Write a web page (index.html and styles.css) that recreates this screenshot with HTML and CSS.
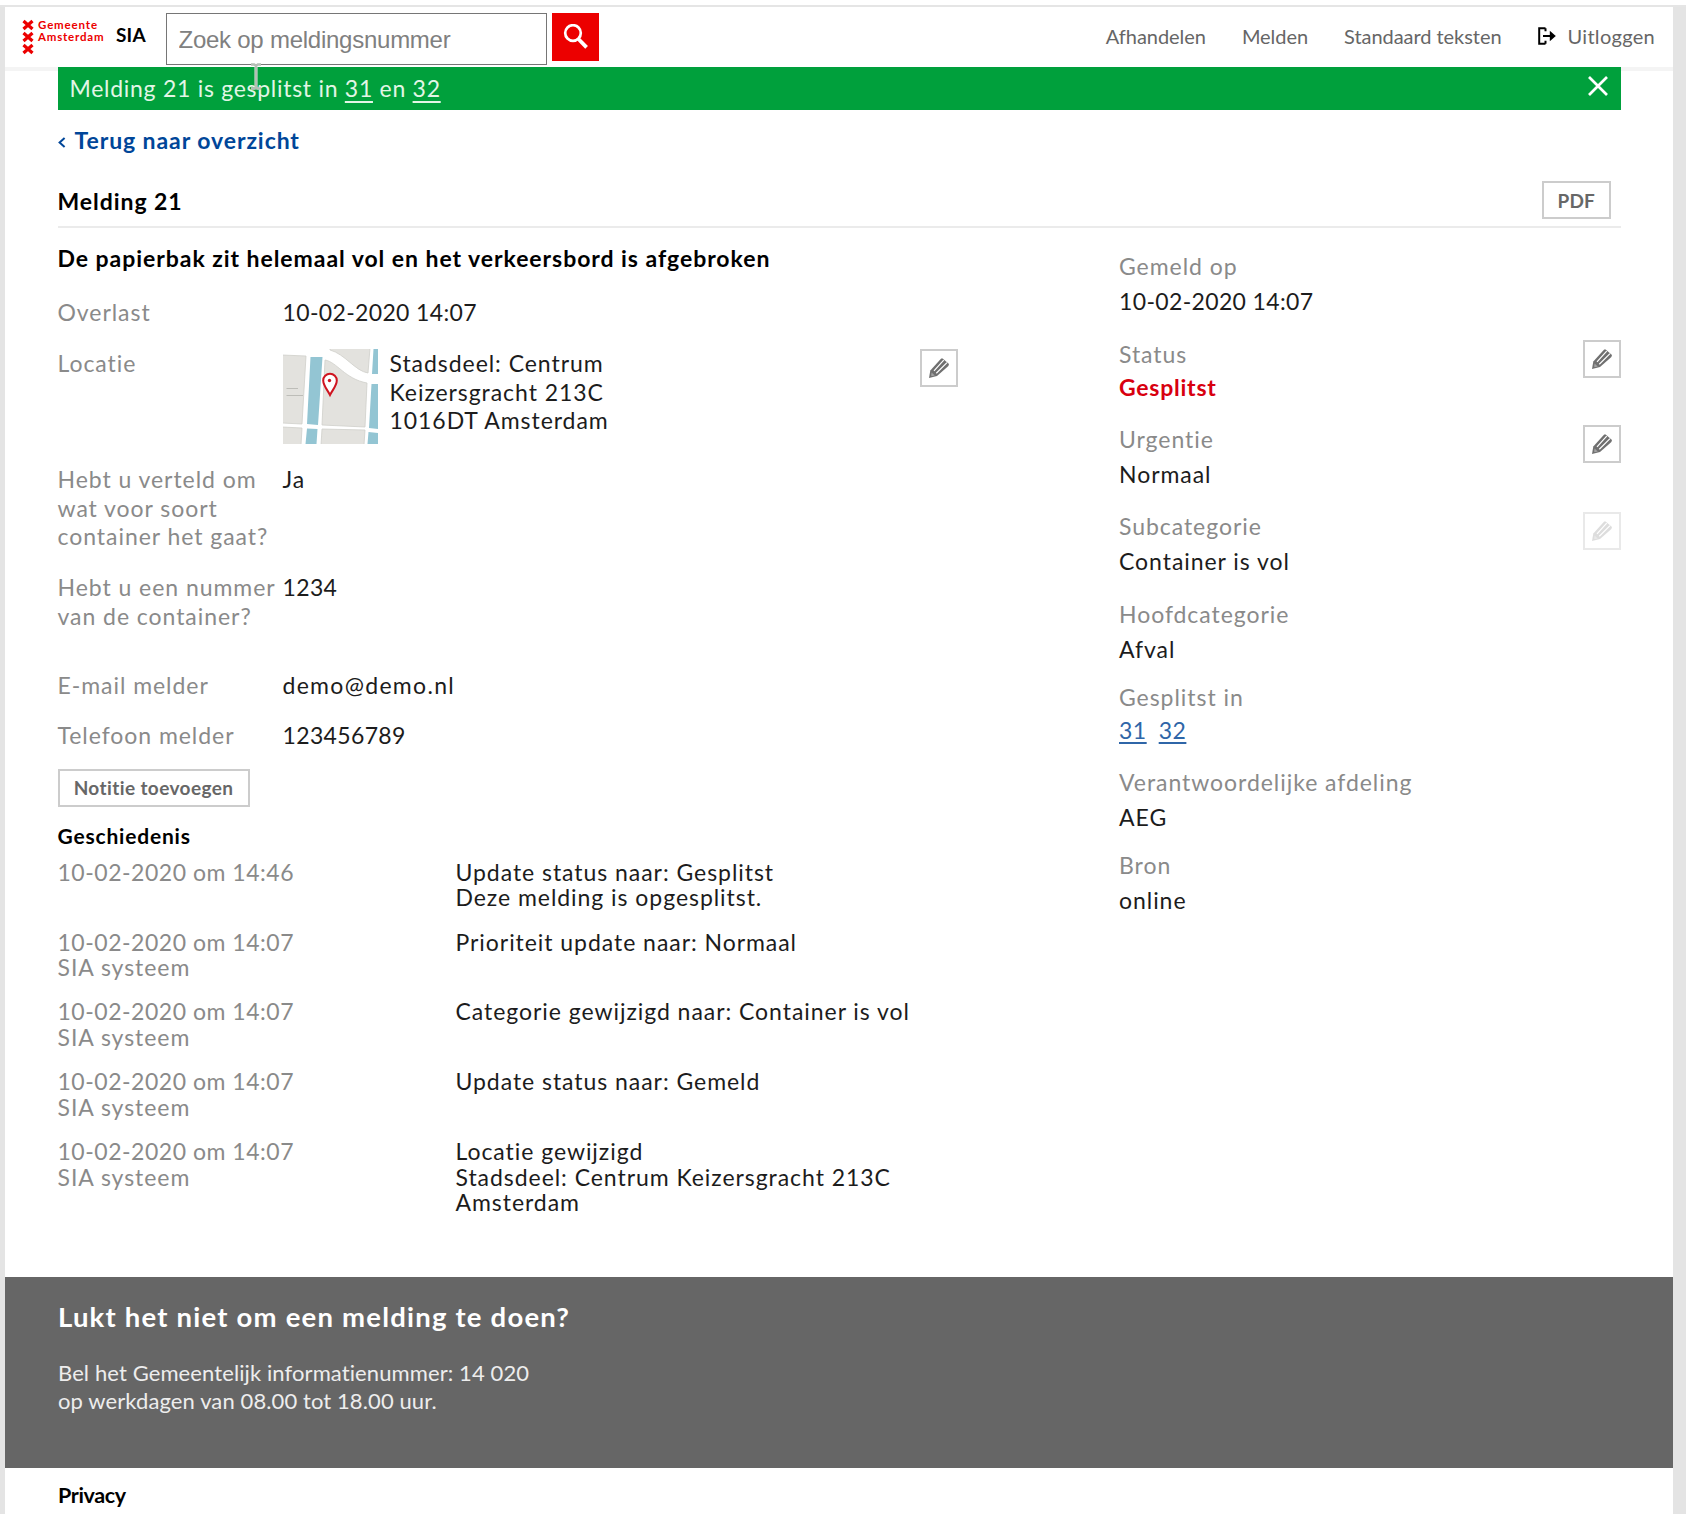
FILE: index.html
```html
<!DOCTYPE html>
<html lang="nl">
<head>
<meta charset="utf-8">
<title>SIA - Melding 21</title>
<link rel="stylesheet" href="styles.css">
</head>
<body>
<svg class="defs" aria-hidden="true">
  <symbol id="pencil" viewBox="0 0 22 22">
    <path d="M1 21 2.3 13.6 13.2 1.6 14.6 1.6 21 7 20.4 8.900 9 19Z" fill="currentColor"/>
    <path d="M6 13.900 15.700 3.200M8.300 16.200 19 5.600" stroke="#fff" stroke-width="1.200" fill="none"/>
    <path d="m3.600 15.600 3.200 3-3 .6-.7-.7Z" fill="#fff" opacity=".35"/>
  </symbol>
</svg>
<div class="shell">
  <div class="page">
    <header class="header">
      <a class="logo">
        <svg class="logo-crosses" viewBox="0 0 12 36" width="12" height="36"><path d="M1.5 2l9 8m0-8l-9 8M1.5 14l9 8m0-8l-9 8M1.5 26l9 8m0-8l-9 8" stroke="#ec0000" stroke-width="3.200" fill="none"/></svg>
        <span class="logo-text"><span class="logo-top">Gemeente</span><span class="logo-bottom">Amsterdam</span></span>
      </a>
      <span class="app-name">SIA</span>
      <form class="search">
        <input class="search-input" type="text" placeholder="Zoek op meldingsnummer">
        <button class="search-button" type="button" aria-label="Zoeken"><svg width="26" height="26" viewBox="0 0 26 26"><circle cx="10" cy="9" r="7.800" fill="none" stroke="#fff" stroke-width="2.700"/><path d="M15.400 15 23.600 23.400" stroke="#fff" stroke-width="3.800"/></svg></button>
      </form>
      <nav class="nav">
        <a>Afhandelen</a>
        <a>Melden</a>
        <a>Standaard teksten</a>
        <a class="logout"><svg width="18" height="18" viewBox="0 0 18 18"><path d="M7.500 1.200H1.200v15.600h6.300M7.500 13.800v3M7.500 1.200v3M5 9h9" fill="none" stroke="#000" stroke-width="2"/><path d="m11.800 3.800 6 5.200-6 5.200Z"/></svg>Uitloggen</a>
      </nav>
    </header>
    <main class="main">
      <div class="alert">
        <span>Melding 21 is gesplitst in <a>31</a> en <a>32</a></span>
        <svg class="alert-close" width="20" height="20" viewBox="0 0 20 20"><path d="M1 1 19 19M19 1 1 19" stroke="#fff" stroke-width="2.700"/></svg>
        <svg class="cursor" width="12" height="27" viewBox="0 0 12 27"><path d="M1 1.500h3.200L6 3l1.800-1.500H11M1 25.500h3.200L6 24l1.800 1.500H11M6 3v21" fill="none" stroke="#fff" stroke-width="4" opacity=".4"/><path d="M1 1.500h3.200L6 3l1.800-1.500H11M1 25.500h3.200L6 24l1.800 1.500H11M6 3v21" fill="none" stroke="#b4beb5" stroke-width="2.400"/></svg>
      </div>
      <a class="back"><svg width="8" height="11" viewBox="0 0 8 11"><path d="M6.600 1 1.600 5.500l5 4.500" fill="none" stroke="#004699" stroke-width="2"/></svg>Terug naar overzicht</a>
      <div class="title-row"><h1>Melding 21</h1><button class="button pdf" type="button">PDF</button></div>
      <div class="columns">
        <section class="details">
          <h2>De papierbak zit helemaal vol en het verkeersbord is afgebroken</h2>
          <dl class="rows">
            <div class="row"><dt>Overlast</dt><dd class="digits">10-02-2020 14:07</dd></div>
            <div class="row location">
              <dt>Locatie</dt>
              <dd>
                <svg class="map" width="95" height="95" viewBox="0 0 95 95">
                  <path fill="#fff" d="M0 0h95v95H0z"/>
                  <path fill="#e3e2de" stroke="#cfcfca" stroke-width=".8" d="M-1 6 23 7 19 75-1 74ZM-1 78l20 1-1 17H-1ZM42 11C54 13 62 30 84 34L82 78 39 76ZM39 80l43 1-1 15H38ZM47-1H87L85 24C72 22 62 5 47 1Z"/>
                  <path fill="#93c5d3" d="M27.500 8H39.500L35 76 24 75ZM24 79.500 34.500 80 33.500 95H22.500ZM90.500 0H95V25H89ZM88.500 35H95V80L86 79ZM85.500 83 95 84V95H84.500Z"/>
                  <path d="M3.500 39.500H15M3.500 46.500H20" stroke="#bdbdb8" stroke-width="1"/>
                  <path d="M47 46C44.500 41 40.200 36.500 40.200 31.500a6.800 6.800 0 0 1 13.600 0C53.800 36.500 49.500 41 47 46Z" fill="#fff" stroke="#cf1420" stroke-width="2"/>
                  <circle cx="46.500" cy="31.500" r="1.700" fill="#cf1420"/>
                </svg>
                <address>Stadsdeel: Centrum<br>Keizersgracht 213C<br>1016DT Amsterdam</address>
              </dd>
              <button class="edit" type="button" aria-label="Locatie wijzigen"><svg width="22" height="22"><use href="#pencil"/></svg></button>
            </div>
            <div class="row kind"><dt>Hebt u verteld om wat voor soort container het gaat?</dt><dd>Ja</dd></div>
            <div class="row number"><dt>Hebt u een nummer van de container?</dt><dd class="digits">1234</dd></div>
            <div class="row email"><dt>E-mail melder</dt><dd class="mail">demo@demo.nl</dd></div>
            <div class="row"><dt>Telefoon melder</dt><dd class="digits">123456789</dd></div>
          </dl>
          <button class="button note" type="button">Notitie toevoegen</button>
          <h3>Geschiedenis</h3>
          <ul class="history">
            <li><div class="when"><span class="digits">10-02-2020 om 14:46</span></div><div>Update status naar: Gesplitst<br>Deze melding is opgesplitst.</div></li>
            <li><div class="when"><span class="digits">10-02-2020 om 14:07</span><br>SIA systeem</div><div>Prioriteit update naar: Normaal</div></li>
            <li><div class="when"><span class="digits">10-02-2020 om 14:07</span><br>SIA systeem</div><div>Categorie gewijzigd naar: Container is vol</div></li>
            <li><div class="when"><span class="digits">10-02-2020 om 14:07</span><br>SIA systeem</div><div>Update status naar: Gemeld</div></li>
            <li><div class="when"><span class="digits">10-02-2020 om 14:07</span><br>SIA systeem</div><div>Locatie gewijzigd<br>Stadsdeel: Centrum Keizersgracht 213C<br>Amsterdam</div></li>
          </ul>
        </section>
        <aside class="meta">
          <dl>
            <div class="entry"><div><dt>Gemeld op</dt><dd class="digits">10-02-2020 14:07</dd></div></div>
            <div class="entry close"><div><dt>Status</dt><dd class="alert-value">Gesplitst</dd></div><button class="edit" type="button" aria-label="Status wijzigen"><svg width="22" height="22"><use href="#pencil"/></svg></button></div>
            <div class="entry"><div><dt>Urgentie</dt><dd>Normaal</dd></div><button class="edit" type="button" aria-label="Urgentie wijzigen"><svg width="22" height="22"><use href="#pencil"/></svg></button></div>
            <div class="entry"><div><dt>Subcategorie</dt><dd>Container is vol</dd></div><button class="edit" type="button" disabled aria-label="Subcategorie wijzigen"><svg width="22" height="22"><use href="#pencil"/></svg></button></div>
            <div class="entry tight"><div><dt>Hoofdcategorie</dt><dd>Afval</dd></div></div>
            <div class="entry close"><div><dt>Gesplitst in</dt><dd class="links"><a>31</a><a>32</a></dd></div></div>
            <div class="entry tight"><div><dt>Verantwoordelijke afdeling</dt><dd>AEG</dd></div></div>
            <div class="entry"><div><dt>Bron</dt><dd>online</dd></div></div>
          </dl>
        </aside>
      </div>
    </main>
    <footer>
      <div class="help">
        <h2>Lukt het niet om een melding te doen?</h2>
        <p>Bel het Gemeentelijk informatienummer: 14 020<br>op werkdagen van 08.00 tot 18.00 uur.</p>
      </div>
      <a class="privacy">Privacy</a>
    </footer>
  </div>
</div>
</body>
</html>
```
FILE: styles.css
```css
* { box-sizing: border-box; }
html, body { height: 100%; }
body {
  margin: 0;
  padding-top: 5px;
  overflow: hidden;
  background: #fff;
  color: #1c1c1c;
  font: 23px/28.67px Lato, "Open Sans", sans-serif;
  letter-spacing: .95px;
}
h1, h2, h3, p, dl, dd, ul { margin: 0; padding: 0; }
button { font-family: inherit; padding: 0; border-radius: 0; }
svg { display: block; flex: none; }
.defs { position: absolute; width: 0; height: 0; }
.digits { letter-spacing: .35px; }
.when .digits { letter-spacing: .52px; }

.shell {
  min-height: 100%;
  padding: 0 13px 0 5px;
  border-top: 2px solid #e5e5e5;
  background: #e4e4e4;
}
.page { background: #fff; height: 1507px; overflow: hidden; }

.header {
  display: flex;
  height: 60px;
  box-shadow: 0 4px 0 #f4f4f4;
}
.logo { display: flex; width: 93px; padding: 11px 0 0 17px; color: #ec0000; }
.logo-crosses { margin-top: 1px; }
.logo-text {
  display: flex;
  flex-direction: column;
  margin: 1px 0 0 4px;
  font: 700 11.5px/12.4px Lato, sans-serif;
}
.logo-top { letter-spacing: .85px; }
.logo-bottom { letter-spacing: .8px; }
.app-name {
  width: 67.5px;
  padding: 14px 0 0 18px;
  color: #000;
  font-size: 19px;
  font-weight: 700;
  letter-spacing: .2px;
}
.search { display: flex; gap: 5.5px; padding-top: 6px; }
.search-input {
  width: 381px;
  height: 52px;
  padding: 2px 12px 0;
  border: 1.5px solid #767676;
  border-radius: 0;
  background: #fff;
  font: 24px "Liberation Sans", Arial, sans-serif;
  letter-spacing: -.25px;
}
.search-input::placeholder { color: #808080; }
.search-button {
  display: grid;
  place-items: center;
  width: 47px;
  height: 48px;
  border: 0;
  background: #ec0000;
}
.nav {
  display: flex;
  align-items: flex-start;
  gap: 36px;
  margin: 15px 18px 0 auto;
  color: #666;
  font-size: 20px;
  letter-spacing: -.05px;
}
.logout { display: flex; align-items: center; gap: 12px; letter-spacing: .3px; }

.main { width: 1563px; height: 1209.5px; margin-left: 52.5px; }
.alert {
  position: relative;
  display: flex;
  align-items: center;
  justify-content: space-between;
  height: 43px;
  padding: 0 13px 0 12px;
  background: #00a03c;
  color: #e2f6e6;
  letter-spacing: .72px;
}
.alert a { text-decoration: underline; text-decoration-thickness: 1.5px; text-underline-offset: 4px; }
.alert-close { margin-bottom: 5px; }
.cursor { position: absolute; left: 192px; top: -4px; }
.back {
  display: flex;
  align-items: center;
  gap: 9px;
  margin-top: 16px;
  color: #004699;
  font-weight: 700;
  letter-spacing: .92px;
}
.back svg { margin-top: 4px; }
.title-row {
  display: flex;
  align-items: flex-start;
  justify-content: space-between;
  height: 46.5px;
  margin-top: 26.5px;
  padding: 0 10px 0 0;
  border-bottom: 2px solid #ebebeb;
}
h1, .details h2 { color: #000; font-size: 23px; font-weight: 700; line-height: 28.67px; }
h1 { margin-top: 5.5px; letter-spacing: .95px; }
.button {
  height: 38px;
  border: 2px solid #ccc;
  background: #fff;
  color: #676767;
  font-size: 19px;
  font-weight: 700;
  letter-spacing: .4px;
}
.pdf { width: 68.5px; letter-spacing: .1px; }
.note { display: block; width: 192px; margin-top: 19.2px; }

.columns { display: grid; grid-template-columns: 900.5px 501.5px; justify-content: space-between; }
.details h2 { margin: 16px 0 25.5px; letter-spacing: .95px; }
.row { display: grid; grid-template-columns: 225px 1fr auto; margin-bottom: 22.5px; }
dt, .when { color: #8a8a8a; }
.row.location { margin-bottom: 20.9px; }
.location dd { display: flex; gap: 12px; }
address { font-style: normal; }
.row.kind { margin-bottom: 22.2px; }
.row.number { margin-bottom: 41px; }
.row.email { margin-bottom: 21px; }
.mail { letter-spacing: 1.3px; }
.row:last-child { margin-bottom: 0; }
.edit {
  display: grid;
  place-items: center;
  width: 38px;
  height: 38px;
  border: 2px solid #ccc;
  background: #fff;
  color: #707070;
}
.edit:disabled { border-color: #e9e9e9; color: #ddd; }
h3 {
  margin: 15.5px 0 8.5px;
  color: #000;
  font-size: 21px;
  font-weight: 700;
  line-height: 28.67px;
  letter-spacing: .8px;
}
.history { list-style: none; line-height: 25.6px; }
.history li { display: grid; grid-template-columns: 398px 1fr; margin-bottom: 18.7px; }

.meta { padding-top: 24.5px; }
.entry { display: flex; justify-content: space-between; margin-bottom: 23.8px; }
.entry dd { margin-top: 6.3px; }
.entry.close dd { margin-top: 4.3px; }
.entry.tight { margin-bottom: 19px; }
.alert-value { color: #d8000f; font-weight: 700; letter-spacing: .75px; }
.links { display: flex; gap: 12px; color: #2f66a8; }
.links a { text-decoration: underline; text-decoration-thickness: 2px; text-underline-offset: 3px; letter-spacing: .5px; }

.help { height: 191.7px; padding: 25px 53px 0; background: #666; color: #fff; }
.help h2 { font-size: 27.5px; line-height: 30px; letter-spacing: 1.2px; }
.help p { margin-top: 27.3px; color: #ededed; font-size: 22px; letter-spacing: .1px; }
.privacy {
  display: block;
  margin: 13px 0 0 53px;
  color: #000;
  font-size: 21.5px;
  font-weight: 700;
  letter-spacing: -.35px;
}
```
